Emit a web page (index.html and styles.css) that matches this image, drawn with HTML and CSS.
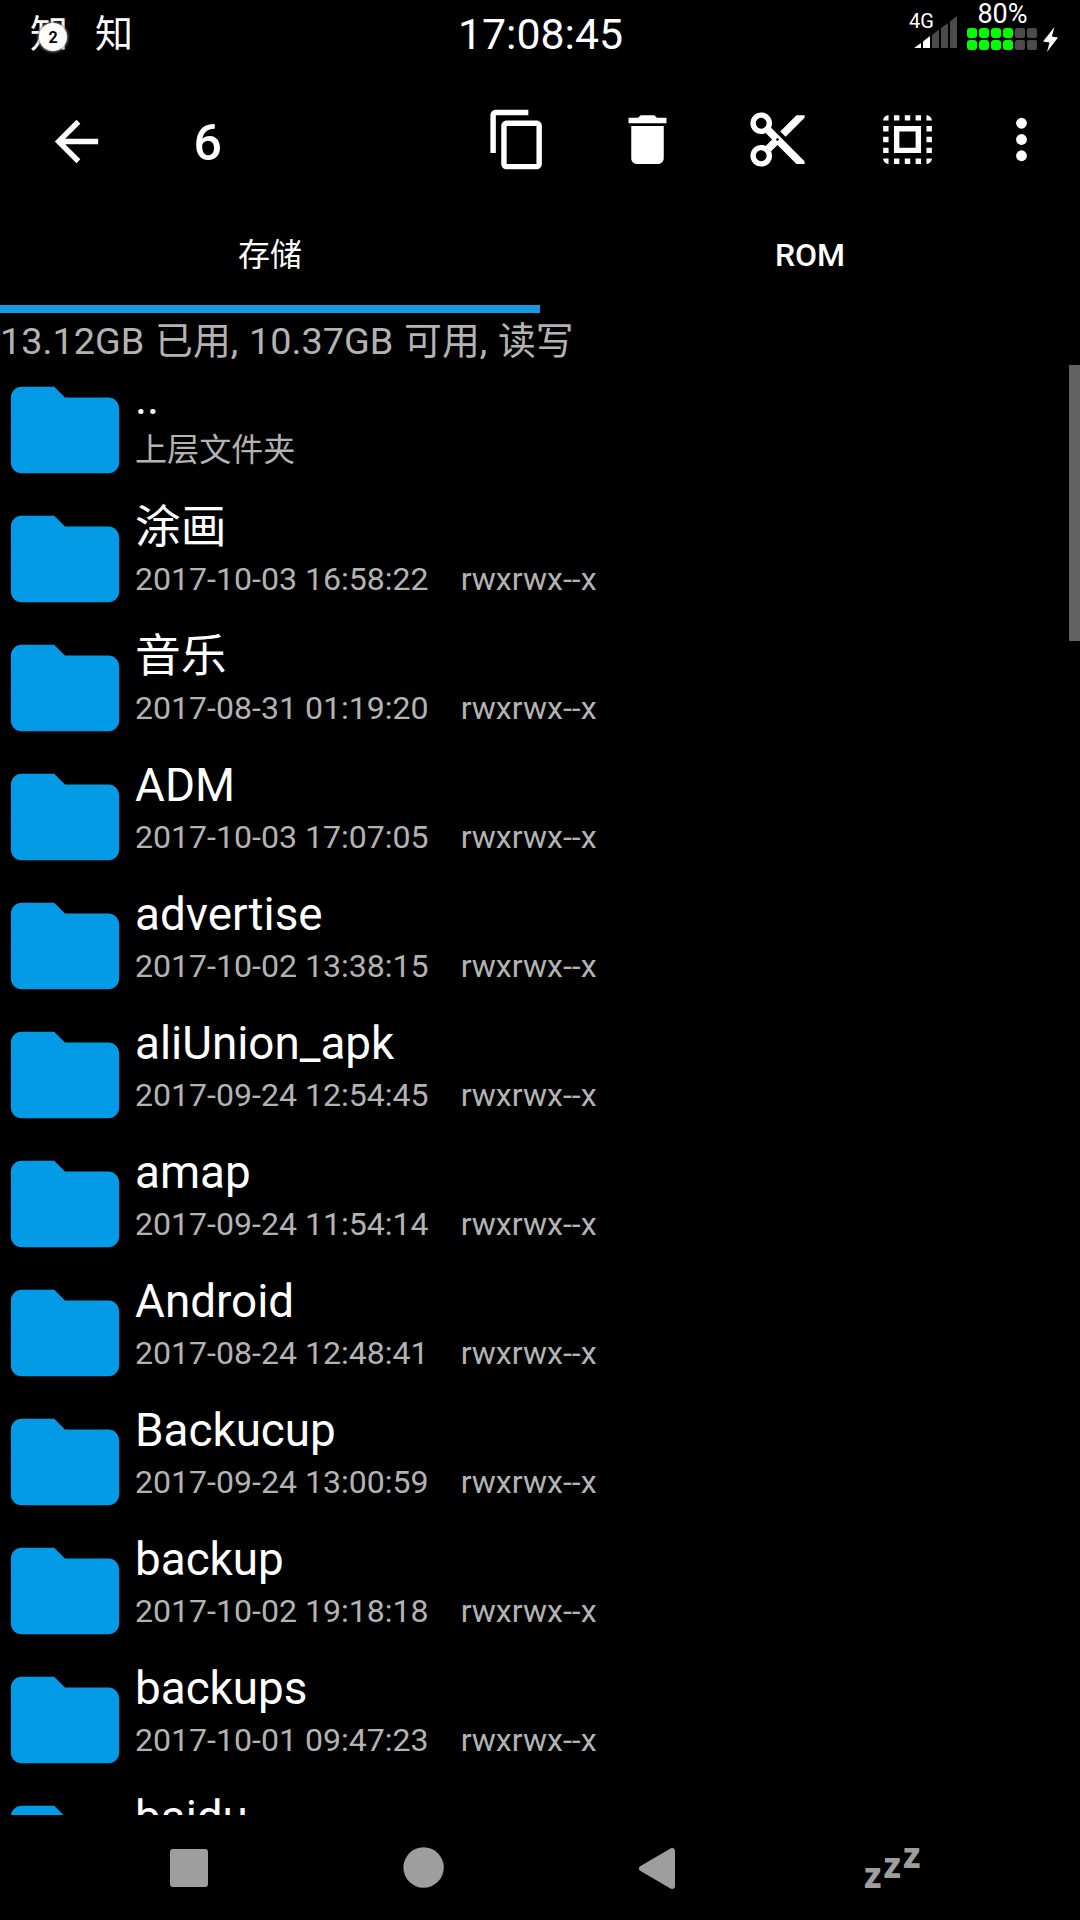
FILE: index.html
```
<!DOCTYPE html>
<html lang="zh-CN">
<head>
    <meta charset="UTF-8">
    <meta name="viewport" content="width=device-width, initial-scale=1.0">
    <title>文件管理器</title>
    <link rel="stylesheet" href="styles.css">
</head>
<body>

    <div class="status-bar">
        <div class="notifications">
            <span class="notice">知<span class="badge">2</span></span>
            <span class="notice">知</span>
        </div>
        <div class="clock">17:08:45</div>
        <div class="indicators">
            <div class="network">
                <span class="network-type">4G</span>
                <svg class="signal" viewBox="0 0 44 33">
                    <path fill="#fff" d="M0 32 7 27V32ZM9 25.5 16 20V32H9Z"/>
                    <path fill="#4b4b4b" d="M18 19 25 13.5V32H18ZM27 12 34 7V32H27ZM36 5.500 43 0V32H36Z"/>
                </svg>
            </div>
            <div class="battery">
                <span class="battery-level">80%</span>
                <div class="cells">
                    <i class="on"></i><i class="on"></i><i class="on"></i><i class="on"></i><i></i><i></i>
                    <i class="on"></i><i class="on"></i><i class="on"></i><i class="on"></i><i></i><i></i>
                </div>
            </div>
            <svg class="bolt" viewBox="0 0 16 25"><path fill="#fff" d="M11.500 0 0 14.500 6.500 15.500 4 25 15 10.500 8.800 9.500Z"/></svg>
        </div>
    </div>

    <div class="toolbar">
        <svg class="icon back" viewBox="0 0 24 24"><path d="M20 11H7.830l5.590-5.590L12 4l-8 8 8 8 1.410-1.410L7.830 13H20v-2z"/></svg>
        <span class="count">6</span>
        <div class="actions">
            <button><svg class="icon" viewBox="0 0 24 24"><path d="M16 1H4c-1.100 0-2 .9-2 2v14h2V3h12V1zm3 4H8c-1.100 0-2 .9-2 2v14c0 1.100.9 2 2 2h11c1.100 0 2-.9 2-2V7c0-1.100-.9-2-2-2zm0 16H8V7h11v14z"/></svg></button>
            <button><svg class="icon" viewBox="0 0 24 24"><path d="M6 19c0 1.100.9 2 2 2h8c1.100 0 2-.9 2-2V7H6v12zM19 4h-3.500l-1-1h-5l-1 1H5v2h14V4z"/></svg></button>
            <button><svg class="icon" viewBox="0 0 24 24"><path d="M9.640 7.640c.23-.5.36-1.050.36-1.640 0-2.210-1.790-4-4-4S2 3.790 2 6s1.790 4 4 4c.59 0 1.140-.13 1.640-.36L10 12l-2.360 2.360C7.140 14.130 6.590 14 6 14c-2.210 0-4 1.790-4 4s1.790 4 4 4 4-1.790 4-4c0-.59-.13-1.140-.36-1.640L12 14l7 7h3v-1L9.640 7.640zM6 8c-1.100 0-2-.89-2-2s.9-2 2-2 2 .89 2 2-.9 2-2 2zm0 12c-1.100 0-2-.89-2-2s.9-2 2-2 2 .89 2 2-.9 2-2 2zm6-7.500c-.28 0-.5-.22-.5-.5s.22-.5.5-.5.5.22.5.5-.22.5-.5.5zM19 3l-6 6 2 2 7-7V3z"/></svg></button>
            <button><svg class="icon" viewBox="0 0 24 24"><path d="M3 5h2V3c-1.100 0-2 .9-2 2zm0 8h2v-2H3v2zm4 8h2v-2H7v2zM3 9h2V7H3v2zm10-6h-2v2h2V3zm6 0v2h2c0-1.100-.9-2-2-2zM5 21v-2H3c0 1.100.9 2 2 2zm-2-4h2v-2H3v2zM9 3H7v2h2V3zm2 18h2v-2h-2v2zm8-8h2v-2h-2v2zm0 8c1.100 0 2-.9 2-2h-2v2zm0-12h2V7h-2v2zm0 8h2v-2h-2v2zm-4 4h2v-2h-2v2zm0-16h2V3h-2v2zM7 17h10V7H7v10zm2-8h6v6H9V9z"/></svg></button>
            <button class="more"><svg class="icon" viewBox="0 0 24 24"><circle cx="12" cy="6" r="2"/><circle cx="12" cy="12" r="2"/><circle cx="12" cy="18" r="2"/></svg></button>
        </div>
    </div>

    <div class="tabs">
        <div class="tab active">存储</div>
        <div class="tab">ROM</div>
    </div>

    <div class="storage-info">13.12GB 已用, 10.37GB 可用, 读写</div>

    <div class="file-list">
        <div id="fileRows"></div>
        <div class="scrollbar"></div>
    </div>

    <div class="nav-bar">
        <svg class="nav-icon" viewBox="0 0 60 60"><rect x="11" y="11" width="38" height="38" rx="3"/></svg>
        <svg class="nav-icon" viewBox="0 0 60 60"><circle cx="29.600" cy="29.500" r="20.200"/></svg>
        <svg class="nav-icon" viewBox="0 0 60 60"><path class="rounded" d="M13 30.500 43 13V48Z"/></svg>
        <div class="sleep"><span>z</span><span>z</span><span>z</span></div>
    </div>

    <script>
        const files = [
            { name: '..', date: '上层文件夹', mode: '' },
            { name: '涂画', date: '2017-10-03 16:58:22', mode: 'rwxrwx--x' },
            { name: '音乐', date: '2017-08-31 01:19:20', mode: 'rwxrwx--x' },
            { name: 'ADM', date: '2017-10-03 17:07:05', mode: 'rwxrwx--x' },
            { name: 'advertise', date: '2017-10-02 13:38:15', mode: 'rwxrwx--x' },
            { name: 'aliUnion_apk', date: '2017-09-24 12:54:45', mode: 'rwxrwx--x' },
            { name: 'amap', date: '2017-09-24 11:54:14', mode: 'rwxrwx--x' },
            { name: 'Android', date: '2017-08-24 12:48:41', mode: 'rwxrwx--x' },
            { name: 'Backucup', date: '2017-09-24 13:00:59', mode: 'rwxrwx--x' },
            { name: 'backup', date: '2017-10-02 19:18:18', mode: 'rwxrwx--x' },
            { name: 'backups', date: '2017-10-01 09:47:23', mode: 'rwxrwx--x' },
            { name: 'baidu', date: '', mode: '' }
        ];

        let rowsHtml = '';
        files.forEach(file => {
            rowsHtml += `<div class="file-row">
                <svg class="folder" viewBox="0 0 24 24"><path d="M10 4H4c-1.100 0-1.990.9-1.990 2L2 18c0 1.100.9 2 2 2h16c1.100 0 2-.9 2-2V8c0-1.100-.9-2-2-2h-8l-2-2z"/></svg>
                <div class="file-text">
                    <div class="file-name">${file.name}</div>
                    <div class="file-meta"><span class="file-date">${file.date}</span><span>${file.mode}</span></div>
                </div>
            </div>`;
        });
        document.getElementById('fileRows').innerHTML = rowsHtml;
    </script>

</body>
</html>
```
FILE: styles.css
```
:root {
    --accent: #039be5;
    --muted: #b3b3b3;
    --nav: #9e9e9e;
    --dim: #4b4b4b;
}
* {
    box-sizing: border-box;
}
body {
    margin: 0;
    width: 1080px;
    height: 1920px;
    overflow: hidden;
    display: flex;
    flex-direction: column;
    background: #000;
    color: #fff;
    font-family: Roboto, 'Noto Sans CJK SC', sans-serif;
}
svg {
    display: block;
}

/* status bar */
.status-bar {
    height: 72px;
    flex: none;
    display: grid;
    grid-template-columns: 1fr auto 1fr;
}
.notifications {
    display: flex;
    gap: 27px;
    padding: 5px 0 0 30px;
}
.notice {
    position: relative;
    width: 38px;
    font-size: 38px;
    line-height: 58px;
}
.badge {
    position: absolute;
    left: 9px;
    top: 18px;
    width: 28px;
    height: 28px;
    border-radius: 50%;
    background: #fff;
    box-shadow: 0 0 3px 1px #888;
    color: #000;
    font-size: 16px;
    font-weight: 700;
    line-height: 29px;
    text-align: center;
}
.clock {
    padding-left: 1px;
    font-size: 42.8px;
    line-height: 68px;
}
.indicators {
    display: flex;
    justify-content: flex-end;
    padding-right: 21px;
}
.network {
    width: 49px;
    padding-top: 11px;
    margin-right: 9px;
}
.network-type {
    display: block;
    height: 5px;
    font-size: 20px;
    line-height: 20px;
}
.signal {
    width: 44px;
    height: 33px;
    margin-left: 5px;
}
.battery {
    width: 71px;
}
.battery-level {
    display: block;
    height: 28px;
    font-size: 27px;
    line-height: 28px;
    text-align: center;
}
.cells {
    display: grid;
    grid-template-columns: repeat(6, 10px);
    gap: 2px;
}
.cells i {
    height: 10px;
    border-radius: 2px;
    background: var(--dim);
}
.cells .on {
    background: #00ff00;
    border-radius: 3px;
}
.bolt {
    width: 16px;
    height: 25px;
    margin: 27px 0 0 5px;
}

/* toolbar */
.toolbar {
    height: 138px;
    flex: none;
    display: flex;
    align-items: center;
    padding-right: 26px;
}
.icon {
    width: 65px;
    height: 65px;
    fill: #fff;
}
.back {
    margin-left: 43.5px;
}
.count {
    margin: 3px 0 0 85px;
    font-size: 50px;
    font-weight: 500;
}
.actions {
    display: flex;
    margin: 0 0 3px auto;
}
.actions button {
    width: 130px;
    padding: 0;
    border: 0;
    background: none;
    display: flex;
    justify-content: center;
}
.actions .more {
    width: 82px;
    justify-content: flex-end;
}

/* tabs */
.tabs {
    height: 103px;
    flex: none;
    display: flex;
}
.tab {
    flex: 1;
    border-bottom: 8px solid transparent;
    font-size: 32px;
    font-weight: 500;
    line-height: 91px;
    text-align: center;
}
.tab.active {
    border-color: #149ae0;
    font-weight: 400;
}

.storage-info {
    height: 52px;
    flex: none;
    padding-top: 2px;
    font-size: 37.8px;
    line-height: 52px;
    word-spacing: 1.5px;
    color: var(--muted);
}

/* file list */
.file-list {
    position: relative;
    height: 1450px;
    flex: none;
    overflow: hidden;
}
.file-row {
    height: 129px;
    display: flex;
}
.folder {
    width: 130px;
    height: 130px;
    fill: var(--accent);
}
.file-text {
    padding: 7px 0 0 5px;
}
.file-name {
    font-size: 45.8px;
    line-height: 54px;
}
.file-meta {
    display: flex;
    gap: 32px;
    font-size: 32.1px;
    line-height: 48px;
    color: var(--muted);
}
.scrollbar {
    position: absolute;
    top: 0;
    right: 0;
    width: 11px;
    height: 276px;
    background: #636363;
}

/* navigation bar */
.nav-bar {
    flex: 1;
    display: flex;
    align-items: center;
    gap: 175px;
    padding-left: 159px;
}
.nav-icon {
    width: 60px;
    height: 60px;
    fill: var(--nav);
}
.rounded {
    stroke: var(--nav);
    stroke-width: 6px;
    stroke-linejoin: round;
}
.sleep {
    display: flex;
    align-items: flex-end;
    height: 60px;
    padding-bottom: 3px;
    font-family: 'Noto Sans', sans-serif;
    font-size: 35px;
    font-weight: 800;
    color: var(--nav);
}
.sleep span {
    width: 19.5px;
    line-height: 40px;
}
.sleep span:nth-child(2) {
    padding-bottom: 10px;
}
.sleep span:nth-child(3) {
    padding-bottom: 20px;
}
```
